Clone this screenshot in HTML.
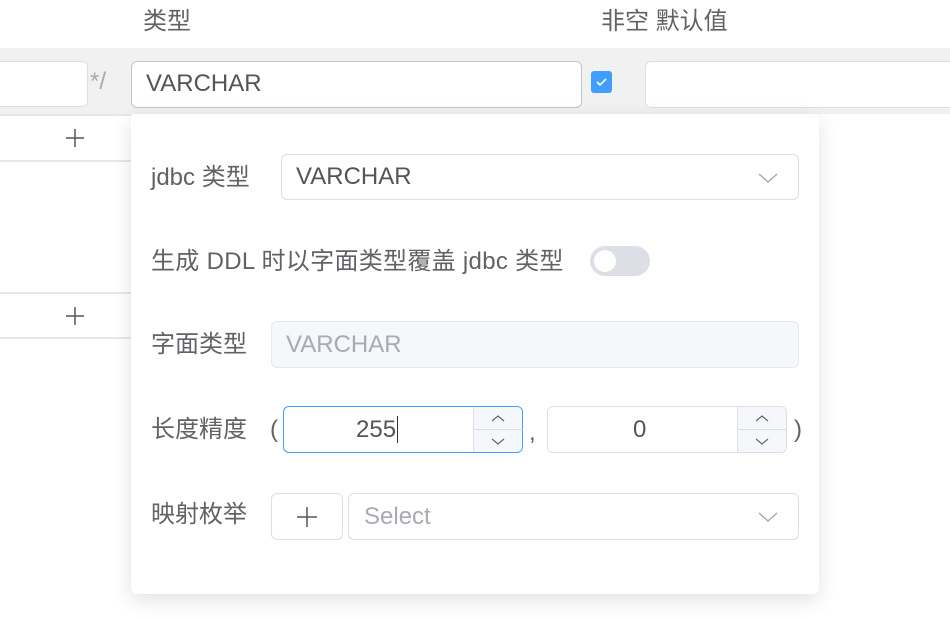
<!DOCTYPE html>
<html><head><meta charset="utf-8"><style>
*{box-sizing:border-box;margin:0;padding:0}
body{width:950px;height:618px;overflow:hidden;background:#fff;font-family:"Liberation Sans","Noto Sans CJK SC",sans-serif;color:#606266;position:relative}
.a{position:absolute}
.t{font-size:24px;color:#606266;white-space:nowrap;line-height:28px}
.inp{position:absolute;border:1px solid #dcdfe6;border-radius:6px;background:#fff}
.chev{position:absolute;width:20px;height:12px}
</style></head><body>
<div class="a t" style="left:143px;top:8px;">类型</div>
<div class="a t" style="left:601px;top:8px;">非空 默认值</div>
<div class="a" style="left:0;top:48px;width:950px;height:66px;background:#f1f1f1"></div>
<div class="inp" style="left:-10px;top:61px;width:98px;height:46px"></div>
<div class="a t" style="left:90px;top:68px;color:#aaa">*/</div>
<div class="inp" style="left:131px;top:61px;width:451px;height:47px;border-color:#c0c4cc"></div>
<div class="a t" style="left:146px;top:70px;color:#555">VARCHAR</div>
<div class="a" style="left:591px;top:71px;width:21px;height:22px;background:#409eff;border-radius:3px"><svg width="21" height="22"><path d="M6 11l3 3 6-6" stroke="#fff" stroke-width="1.6" fill="none"/></svg></div>
<div class="inp" style="left:645px;top:61px;width:320px;height:47px"></div>
<div class="a" style="left:0;top:114px;width:131px;height:2px;background:#e4e7ed"></div>
<div class="a" style="left:0;top:160px;width:131px;height:2px;background:#e4e7ed"></div>
<div class="a" style="left:0;top:292px;width:131px;height:2px;background:#e4e7ed"></div>
<div class="a" style="left:0;top:337px;width:131px;height:2px;background:#e4e7ed"></div>
<svg class="a" style="left:65px;top:128px" width="20" height="20"><path d="M10 1v18M1 10h18" stroke="#555" stroke-width="1.5"/></svg>
<svg class="a" style="left:65px;top:306px" width="20" height="20"><path d="M10 1v18M1 10h18" stroke="#555" stroke-width="1.5"/></svg>
<div class="a" style="left:131px;top:114px;width:688px;height:480px;background:#fff;border-radius:6px;box-shadow:0 6px 20px rgba(0,0,0,0.12)"></div>
<div class="a t" style="left:151px;top:164px">jdbc 类型</div>
<div class="inp" style="left:281px;top:154px;width:518px;height:46px"></div>
<div class="a t" style="left:296px;top:163px;color:#555">VARCHAR</div>
<svg class="chev" style="left:758px;top:172px"><path d="M1 2l9 8 9-8" stroke="#a8abb2" stroke-width="1.5" fill="none"/></svg>
<div class="a t" style="left:151px;top:248px;letter-spacing:0.3px">生成 DDL 时以字面类型覆盖 jdbc 类型</div>
<div class="a" style="left:590px;top:246px;width:60px;height:30px;border-radius:15px;background:#dcdfe6"><div class="a" style="left:4px;top:4px;width:22px;height:22px;border-radius:11px;background:#fff"></div></div>
<div class="a t" style="left:151px;top:331px">字面类型</div>
<div class="inp" style="left:271px;top:321px;width:528px;height:47px;background:#f5f7fa;border-color:#e4e7ed"></div>
<div class="a t" style="left:286px;top:331px;color:#a8abb2">VARCHAR</div>
<div class="a t" style="left:151px;top:416px">长度精度</div>
<div class="a t" style="left:270px;top:416px">(</div>
<div class="inp" style="left:283px;top:406px;width:240px;height:47px;border-color:#409eff"></div>
<div class="a" style="left:473px;top:407px;width:49px;height:45px;background:#f5f7fa;border-left:1px solid #dcdfe6;border-radius:0 5px 5px 0"><div style="position:absolute;top:22px;left:0;width:49px;height:1px;background:#dcdfe6"></div></div>
<svg class="a" style="left:490px;top:413px" width="16" height="34"><path d="M2 8l6-5 6 5M2 26l6 5 6-5" stroke="#666" stroke-width="1.2" fill="none"/></svg>
<div class="a t" style="left:356px;top:416px;color:#555">255<span style="border-left:1.5px solid #333;margin-left:1px"></span></div>
<div class="a t" style="left:529px;top:419px">,</div>
<div class="inp" style="left:547px;top:406px;width:240px;height:47px"></div>
<div class="a" style="left:737px;top:407px;width:49px;height:45px;background:#f5f7fa;border-left:1px solid #dcdfe6;border-radius:0 5px 5px 0"><div style="position:absolute;top:22px;left:0;width:49px;height:1px;background:#dcdfe6"></div></div>
<svg class="a" style="left:754px;top:413px" width="16" height="34"><path d="M2 8l6-5 6 5M2 26l6 5 6-5" stroke="#666" stroke-width="1.2" fill="none"/></svg>
<div class="a t" style="left:633px;top:416px;color:#555">0</div>
<div class="a t" style="left:794px;top:416px">)</div>
<div class="a t" style="left:151px;top:501px">映射枚举</div>
<div class="inp" style="left:271px;top:493px;width:72px;height:47px"></div>
<svg class="a" style="left:296px;top:506px" width="22" height="22"><path d="M11 1v20M1 11h20" stroke="#555" stroke-width="1.5"/></svg>
<div class="inp" style="left:348px;top:493px;width:451px;height:47px"></div>
<div class="a t" style="left:364px;top:503px;color:#a8abb2">Select</div>
<svg class="chev" style="left:758px;top:511px"><path d="M1 2l9 8 9-8" stroke="#a8abb2" stroke-width="1.5" fill="none"/></svg>
</body></html>
